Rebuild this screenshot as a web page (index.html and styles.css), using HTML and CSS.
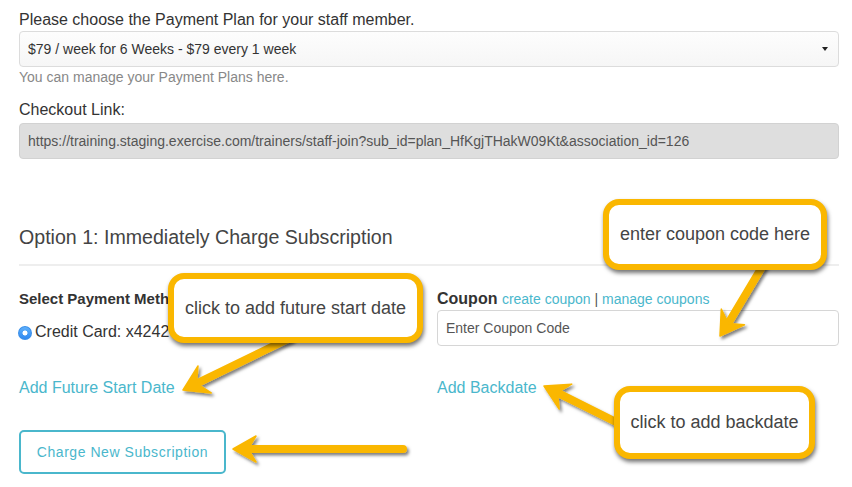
FILE: index.html
```html
<!DOCTYPE html>
<html lang="en">
<head>
<meta charset="utf-8">
<title>Payment Plan</title>
<link rel="stylesheet" href="styles.css">
</head>
<body>
<div class="screen">
  <main class="content">
    <label class="lbl lbl-first">Please choose the Payment Plan for your staff member.</label>
    <div class="select"><span>$79 / week for 6 Weeks - $79 every 1 week</span><span class="caret"></span></div>
    <p class="help">You can manage your Payment Plans here.</p>

    <label class="lbl lbl-checkout">Checkout Link:</label>
    <div class="input readonly">https://training.staging.exercise.com/trainers/staff-join?sub_id=plan_HfKgjTHakW09Kt&amp;association_id=126</div>

    <h3 class="section-title">Option 1: Immediately Charge Subscription</h3>
    <hr class="rule">

    <div class="cols">
      <div class="lbl bold narrow">Select Payment Method</div>
      <div class="lbl"><b class="bold">Coupon</b> <a class="small-link">create coupon</a><span class="sep"> | </span><a class="small-link">manage coupons</a></div>
      <div class="radio-row"><span class="radio"></span>Credit Card: x4242</div>
      <div class="input coupon">Enter Coupon Code</div>
      <a class="link">Add Future Start Date</a>
      <a class="link">Add Backdate</a>
    </div>

    <button class="btn">Charge New Subscription</button>
  </main>

  <svg class="arrows" width="852" height="487" viewBox="0 0 852 487">
    <defs>
      <filter id="sh" x="-30%" y="-30%" width="160%" height="160%">
        <feDropShadow dx="2" dy="2.5" stdDeviation="1.5" flood-color="#000" flood-opacity="0.5"/>
      </filter>
    </defs>
    <g filter="url(#sh)" fill="#fab700" stroke="#fab700">
      <line x1="193.8" y1="384.8" x2="290" y2="338" stroke-width="8" stroke-linecap="round"/>
      <polygon points="183,390 211.2,393 196.5,383.4 198,366" stroke-width="1.5" stroke-linejoin="round"/>
    </g>
    <g filter="url(#sh)" fill="#fab700" stroke="#fab700">
      <line x1="726.7" y1="326" x2="765" y2="262" stroke-width="8" stroke-linecap="round"/>
      <polygon points="720,336 744.5,324.7 728.4,323.5 721.3,309.1" stroke-width="1.5" stroke-linejoin="round"/>
    </g>
    <g filter="url(#sh)" fill="#fab700" stroke="#fab700">
      <line x1="554.7" y1="391.4" x2="620" y2="424" stroke-width="8" stroke-linecap="round"/>
      <polygon points="544,386 559.2,409.2 557.4,392.7 571.8,384.2" stroke-width="1.5" stroke-linejoin="round"/>
    </g>
    <g filter="url(#sh)" fill="#fab700" stroke="#fab700">
      <line x1="245" y1="449" x2="403" y2="449" stroke-width="8" stroke-linecap="round"/>
      <polygon points="233,449 256,436 248,449 256,462" stroke-width="1.5" stroke-linejoin="round"/>
    </g>
  </svg>

  <div class="callout c-future">click to add future start date</div>
  <div class="callout c-coupon">enter coupon code here</div>
  <div class="callout c-back">click to add backdate</div>
</div>
</body>
</html>
```

FILE: styles.css
```css
* { box-sizing: border-box; }

body {
  margin: 0;
  background: #fff;
  font-family: "Liberation Sans", Arial, Helvetica, sans-serif;
  color: #333;
}

.screen {
  position: relative;
  width: 852px;
  height: 487px;
  overflow: hidden;
}

.content {
  width: 820px;
  margin-left: 19px;
  display: flex;
  flex-direction: column;
  align-items: flex-start;
}

.lbl {
  display: block;
  font-size: 16px;
  line-height: 20px;
  color: #333;
}

.lbl-first { margin-top: 10px; }
.lbl-checkout { margin-top: 13px; }

.bold { font-weight: bold; color: #333; }
.narrow { font-size: 15px; white-space: nowrap; }

.select {
  margin-top: 1px;
  width: 820px;
  height: 36px;
  border: 1px solid #dcdcdc;
  border-radius: 4px;
  background: linear-gradient(#fdfdfd, #f6f6f6);
  padding: 0 10px 0 8px;
  display: flex;
  align-items: center;
  justify-content: space-between;
  font-size: 14px;
  color: #333;
}

.caret {
  width: 0;
  height: 0;
  border-left: 3px solid transparent;
  border-right: 3px solid transparent;
  border-top: 4px solid #222;
}

.help {
  margin: 0;
  font-size: 14px;
  line-height: 20px;
  color: #888;
}

.input {
  width: 820px;
  height: 36px;
  border: 1px solid #d6d6d6;
  border-radius: 4px;
  padding: 0 8px;
  display: flex;
  align-items: center;
  font-size: 14px;
  color: #555;
  background: #fff;
}

.readonly {
  margin-top: 3px;
  background: #dedede;
  border-color: #d2d2d2;
}

.section-title {
  margin: 66px 0 0;
  font-size: 19.6px;
  line-height: 24px;
  font-weight: normal;
  color: #444;
}

.rule {
  margin: 15px 0 0;
  width: 820px;
  border: 0;
  border-top: 2px solid #eeeeee;
  height: 0;
}

.cols {
  margin-top: 23px;
  width: 820px;
  display: grid;
  grid-template-columns: 402px 402px;
  grid-template-rows: 21px 36px auto;
  column-gap: 16px;
}

.small-link {
  font-size: 14px;
  color: #4ab7cc;
  font-weight: normal;
}

.sep {
  font-size: 14px;
  color: #555;
}

.radio-row {
  align-self: end;
  margin-bottom: 4px;
  display: flex;
  align-items: center;
  gap: 3px;
  font-size: 16px;
  line-height: 20px;
  color: #333;
}

.radio {
  width: 14px;
  height: 14px;
  border-radius: 50%;
  margin-left: -1px;
  margin-top: 2px;
  background:
    radial-gradient(circle, #fff 0 2.2px, transparent 2.8px),
    linear-gradient(#62b3fc, #2c85ef);
  box-shadow: inset 0 0 0 1px #3b8fe8;
}

.coupon {
  width: 402px;
}

.link {
  margin-top: 32px;
  font-size: 16px;
  line-height: 20px;
  color: #4ab7cc;
  justify-self: start;
}

.btn {
  margin-top: 32px;
  width: 207px;
  height: 44px;
  background: #fff;
  border: 2px solid #4ab7cc;
  border-radius: 5px;
  color: #4ab7cc;
  font-family: "Liberation Sans", Arial, Helvetica, sans-serif;
  font-size: 14px;
  letter-spacing: 0.55px;
  padding: 0;
}

.arrows {
  position: absolute;
  left: 0;
  top: 0;
  pointer-events: none;
}

.callout {
  position: absolute;
  border: 6px solid #fab700;
  border-radius: 16px;
  background: #fff;
  box-shadow: 1px 3px 4px rgba(0, 0, 0, 0.55);
  display: flex;
  align-items: center;
  justify-content: center;
  font-size: 18px;
  color: #444;
  white-space: nowrap;
}

.c-future { left: 168px; top: 273px; width: 255px; height: 70px; }
.c-coupon { left: 603px; top: 199px; width: 224px; height: 71px; }
.c-back { left: 614px; top: 386px; width: 201px; height: 73px; }
```
